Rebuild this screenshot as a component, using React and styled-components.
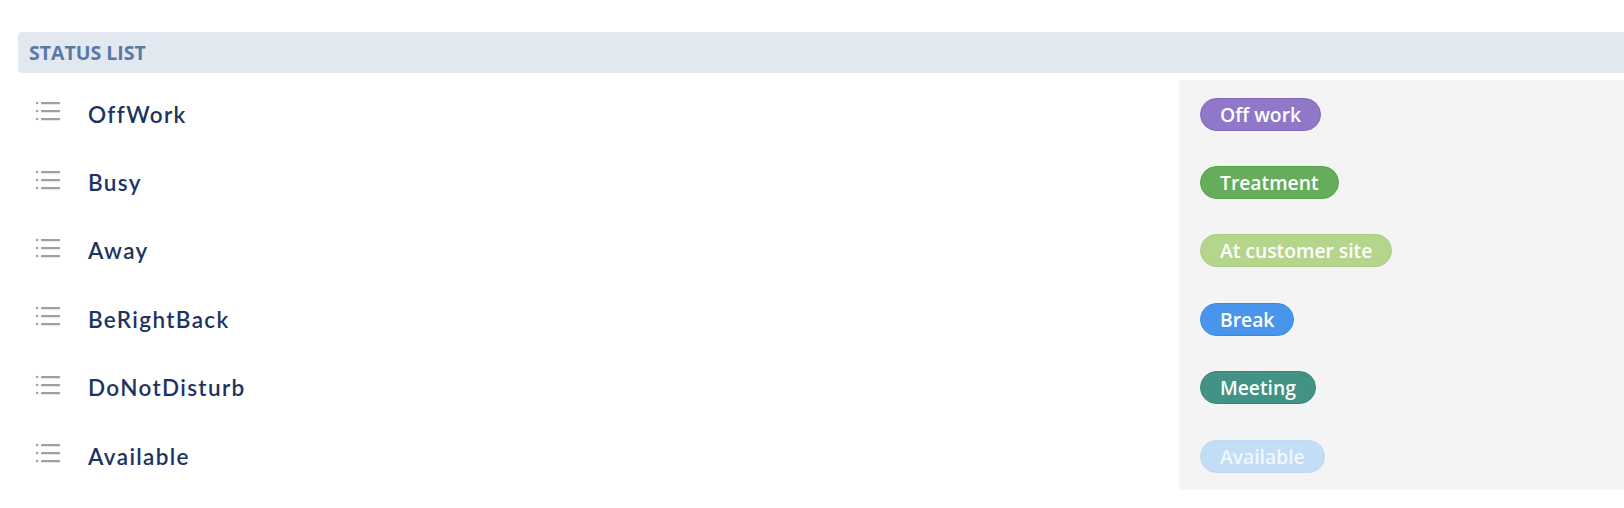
import React from 'react'
import styled, { createGlobalStyle } from 'styled-components'

const GlobalStyle = createGlobalStyle`
  html, body {
    margin: 0;
    padding: 0;
    background: #ffffff;
    overflow: hidden;
  }
`

const STATUSES = [
  { key: 'OffWork', label: 'Off work', bg: '#9077c8', border: '#8467c0', color: '#ffffff' },
  { key: 'Busy', label: 'Treatment', bg: '#65ad5a', border: '#58a04d', color: '#ffffff' },
  { key: 'Away', label: 'At customer site', bg: '#b5d58c', border: '#aacd7f', color: '#ffffff' },
  { key: 'BeRightBack', label: 'Break', bg: '#4a95ec', border: '#3a88e6', color: '#ffffff' },
  { key: 'DoNotDisturb', label: 'Meeting', bg: '#429385', border: '#318675', color: '#ffffff' },
  { key: 'Available', label: 'Available', bg: '#c4ddf6', border: '#bcd8f4', color: '#f0f7fe' },
]

const Page = styled.div`
  padding: 32px 0 0 18px;
  width: 1606px;
`

const SectionHeader = styled.div`
  height: 41px;
  display: flex;
  align-items: center;
  padding-left: 11px;
  background: #e1e8f0;
  border-radius: 4px 0 0 4px;
  font-family: 'Open Sans', sans-serif;
  font-weight: 700;
  font-size: 19.5px;
  color: #5a79a9;
`

const Table = styled.div`
  margin-top: 7px;
  display: grid;
  grid-template-columns: 1161px 1fr;
`

const NameCell = styled.div`
  height: 68.4px;
  display: flex;
  align-items: center;
  padding-left: 18px;
  gap: 28px;
`

const StatusCell = styled.div`
  height: 68.4px;
  display: flex;
  align-items: center;
  padding-left: 21px;
  background: #f4f4f4;
`

const DragIcon = styled.svg`
  width: 24px;
  height: 20px;
  flex: none;
  margin-top: -6px;
`

const Name = styled.span`
  font-family: Lato, 'Noto Sans', sans-serif;
  font-weight: 600;
  font-size: 22.5px;
  color: #1d3461;
  letter-spacing: 1.35px;
`

const Pill = styled.span`
  display: inline-flex;
  align-items: center;
  height: 31px;
  padding: 0 19px;
  border-radius: 17px;
  border: 1px solid ${p => p.$border};
  background: ${p => p.$bg};
  color: ${p => p.$color};
  font-family: 'Open Sans', sans-serif;
  font-weight: 600;
  font-size: 19.3px;
`

const ListIcon = () => (
  <DragIcon viewBox="0 0 24 20">
    <g fill="#9f9f9f">
      <circle cx="1.2" cy="2" r="1.25" />
      <circle cx="1.2" cy="10" r="1.25" />
      <circle cx="1.2" cy="18" r="1.25" />
      <rect x="5" y="1" width="19" height="2.2" rx="0.5" />
      <rect x="5" y="9" width="19" height="2.2" rx="0.5" />
      <rect x="5" y="17" width="19" height="2.2" rx="0.5" />
    </g>
  </DragIcon>
)

export default function App() {
  return (
    <Page>
      <GlobalStyle />
      <SectionHeader>STATUS LIST</SectionHeader>
      <Table>
        {STATUSES.map(s => (
          <React.Fragment key={s.key}>
            <NameCell>
              <ListIcon />
              <Name>{s.key}</Name>
            </NameCell>
            <StatusCell>
              <Pill $bg={s.bg} $border={s.border} $color={s.color}>{s.label}</Pill>
            </StatusCell>
          </React.Fragment>
        ))}
      </Table>
    </Page>
  )
}
